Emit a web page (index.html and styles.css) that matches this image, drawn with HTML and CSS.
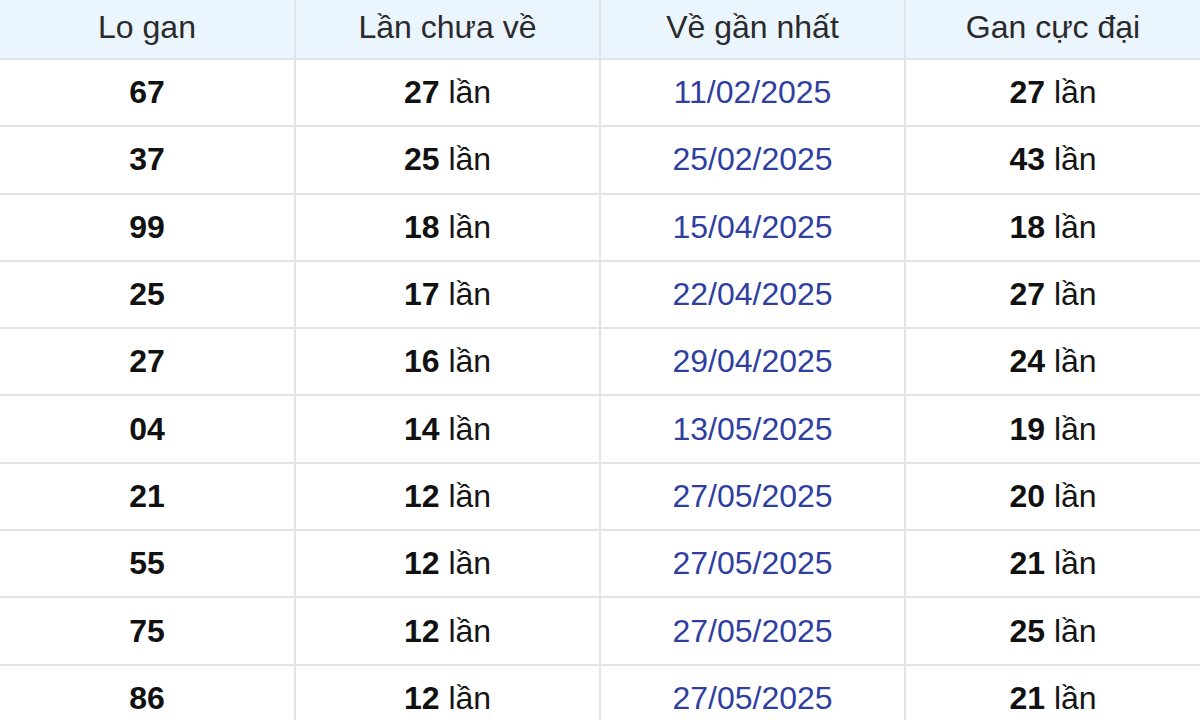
FILE: index.html
```html
<!DOCTYPE html>
<html lang="vi">
<head>
<meta charset="utf-8">
<title>Lo gan</title>
<link rel="stylesheet" href="styles.css">
</head>
<body>
<table class="gan-table">
  <colgroup>
    <col class="c1"><col class="c2"><col class="c3"><col class="c4">
  </colgroup>
  <thead>
    <tr><th>Lo gan</th><th>Lần chưa về</th><th>Về gần nhất</th><th>Gan cực đại</th></tr>
  </thead>
  <tbody>
    <tr><td class="num">67</td><td><b>27</b> lần</td><td class="date">11/02/2025</td><td><b>27</b> lần</td></tr>
    <tr><td class="num">37</td><td><b>25</b> lần</td><td class="date">25/02/2025</td><td><b>43</b> lần</td></tr>
    <tr><td class="num">99</td><td><b>18</b> lần</td><td class="date">15/04/2025</td><td><b>18</b> lần</td></tr>
    <tr><td class="num">25</td><td><b>17</b> lần</td><td class="date">22/04/2025</td><td><b>27</b> lần</td></tr>
    <tr><td class="num">27</td><td><b>16</b> lần</td><td class="date">29/04/2025</td><td><b>24</b> lần</td></tr>
    <tr><td class="num">04</td><td><b>14</b> lần</td><td class="date">13/05/2025</td><td><b>19</b> lần</td></tr>
    <tr><td class="num">21</td><td><b>12</b> lần</td><td class="date">27/05/2025</td><td><b>20</b> lần</td></tr>
    <tr><td class="num">55</td><td><b>12</b> lần</td><td class="date">27/05/2025</td><td><b>21</b> lần</td></tr>
    <tr><td class="num">75</td><td><b>12</b> lần</td><td class="date">27/05/2025</td><td><b>25</b> lần</td></tr>
    <tr><td class="num">86</td><td><b>12</b> lần</td><td class="date">27/05/2025</td><td><b>21</b> lần</td></tr>
  </tbody>
</table>
</body>
</html>
```
FILE: styles.css
```css
html, body {
  margin: 0;
  padding: 0;
  background: #ffffff;
  overflow: hidden;
}
.gan-table {
  width: 1200px;
  border-collapse: collapse;
  table-layout: fixed;
  font-family: "Liberation Sans", Arial, sans-serif;
  font-size: 32px;
  color: #151515;
}
.c1 { width: 295px; }
.c2 { width: 305px; }
.c3 { width: 305px; }
.c4 { width: 295px; }
.gan-table th,
.gan-table td {
  border: 2px solid #e2e4e8;
  text-align: center;
  padding: 0;
}
.gan-table tr > :first-child { border-left: none; }
.gan-table tr > :last-child { border-right: none; }
.gan-table thead th {
  border-top: none;
  height: 54px;
  padding-bottom: 4px;
  font-weight: normal;
  color: #2a2a2a;
  background: #ebf5fd;
}
.gan-table tbody td {
  height: 65.3px;
}
.gan-table b,
.gan-table .num {
  font-weight: bold;
  color: #111;
}
.gan-table .date {
  color: #2f3f9f;
}
```
